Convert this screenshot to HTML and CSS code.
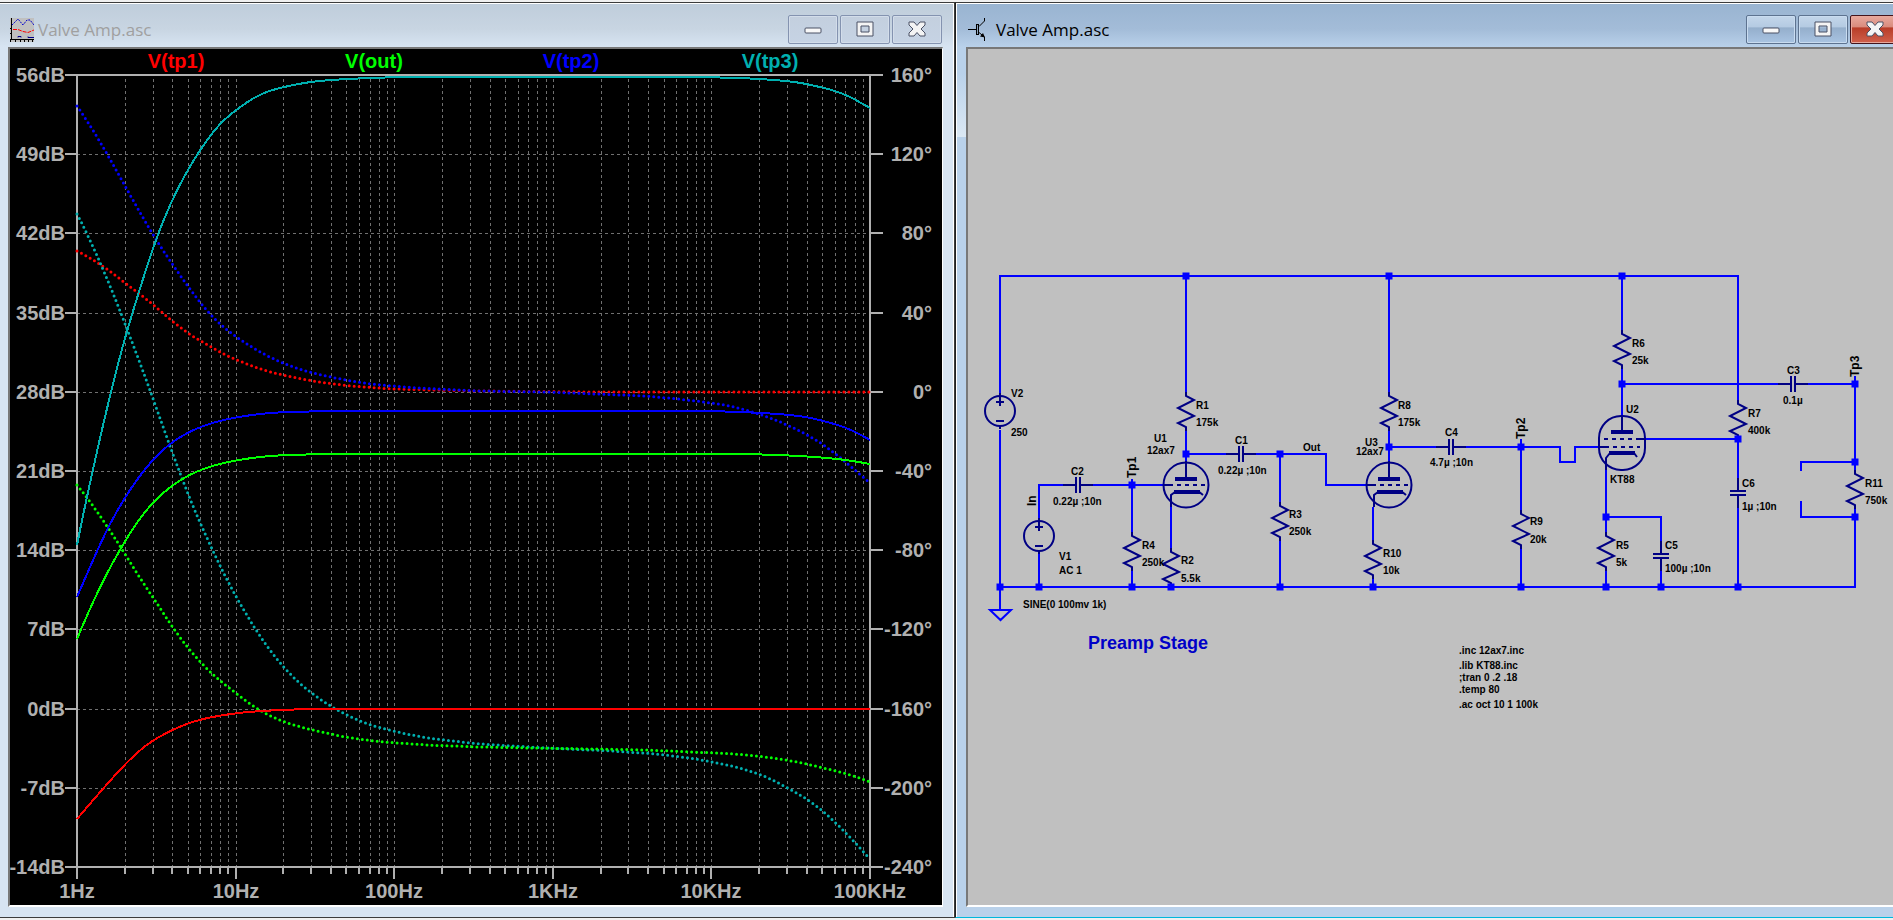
FILE: index.html
```
<!DOCTYPE html>
<html lang="en">
<head>
<meta charset="utf-8">
<title>Valve Amp.asc</title>
<link rel="stylesheet" href="styles.css">
</head>
<body>
<main class="desktop">
  <section class="window window-idle">
    <header class="titlebar">
      <svg class="title-icon" viewBox="0 0 24 24" aria-hidden="true">
        <rect width="24" height="24" fill="#c0c0c0"/>
        <path d="M1.500 0V22M0 21.500H24M0 10.500H2M0 15.500H2M5.500 22V24M10.500 22V24M14.500 22V24M18.500 22V24M22.500 22V24M.5 22V24" stroke="#000" fill="none"/>
        <path d="M2 7L8 1L13 7L17 2H20L24 7" stroke="#00c" stroke-dasharray="2 1" fill="none"/>
        <path d="M3 11.500H8L13 13.500L18 14.500L24 12" stroke="#f00" stroke-dasharray="4 1" fill="none"/>
        <path d="M8 19.500V18.500H11V19.500M18 18.500V19.500H24" stroke="#00008b" fill="none"/>
      </svg>
      <h2 class="title">Valve Amp.asc</h2>
      <div class="controls">
        <button class="control" aria-label="Minimize"><svg viewBox="0 0 24 18"><use href="#minimize"/></svg></button>
        <button class="control" aria-label="Maximize"><svg viewBox="0 0 24 18"><use href="#maximize"/></svg></button>
        <button class="control" aria-label="Close"><svg viewBox="0 0 24 18"><use href="#close"/></svg></button>
      </div>
    </header>
    <div class="client client-plot">
      <svg class="plot" viewBox="10 49 932 856" role="img" aria-label="Frequency response plot">
        <g id="grid" class="grid"></g>
        <g id="axes" class="axes"></g>
        <g id="traces" class="traces"></g>
        <g id="labels" class="plot-labels"></g>
      </svg>
    </div>
  </section>

  <section class="window window-active">
    <header class="titlebar">
      <svg class="title-icon" viewBox="0 0 24 24" aria-hidden="true">
        <path d="M0 11.500H8M16.500 0V3L11 8.500M11 14.500L16.500 19V23" stroke="#000" fill="none"/>
        <rect x="8.500" y="6.500" width="2" height="10" fill="#8fa5bd" stroke="#000"/>
        <path d="M17 19.500L12 18.500L15 15Z"/>
      </svg>
      <h2 class="title">Valve Amp.asc</h2>
      <div class="controls">
        <button class="control" aria-label="Minimize"><svg viewBox="0 0 24 18"><use href="#minimize"/></svg></button>
        <button class="control" aria-label="Maximize"><svg viewBox="0 0 24 18"><use href="#maximize"/></svg></button>
        <button class="control control-close" aria-label="Close"><svg viewBox="0 0 24 18"><use href="#close"/></svg></button>
      </div>
    </header>
    <div class="client client-schematic">
      <svg class="schematic" viewBox="968 49 925 856" role="img" aria-label="Preamp schematic">
        <defs>
          <g id="minimize"><rect x="4" y="7" width="16" height="5" rx="1" fill="#f8f8f8" stroke="#4a5064"/></g>
          <g id="maximize"><path d="M4 1H20V15H4ZM8 5V11H16V5Z" fill="#f4f4f4" fill-rule="evenodd" stroke="#4a5064"/></g>
          <g id="close"><path d="M4 1H9L12 4.500L15 1H20V4L16 8L20 12V15H15L12 11.500L9 15H4V12L8 8L4 4Z" fill="#f4f4f4" stroke="#4a5064" stroke-linejoin="round"/></g>
          <path id="resistor" d="M0 -4V0L8 4L-8 12L8 20L-8 27L0 31V35"/>
          <path id="cap-h" d="M-15 0H-2M2 0H15M-2 -8V8M2 -8V8"/>
          <path id="cap-v" d="M0 -15V-2M0 2V15M-8 -2H8M-8 2H8"/>
          <g id="source">
            <circle r="15"/>
            <path d="M0 -18V-5M-4 -9H4M-4 10H4M0 15V18"/>
          </g>
          <g id="triode">
            <circle r="22.500"/>
            <path d="M0 -24V-6M-23 0H-13M-9 0H-5M-1 0H3M7 0H11M15 0H19M-15 22V10L-11 7M12 6L17 10"/>
            <path class="heavy" d="M-11 -6H11M-12 7H14"/>
          </g>
          <g id="pentode">
            <rect x="-23" y="-27" width="46" height="54" rx="22"/>
            <path d="M0 -28V-11M-18 -4H-14M-10 -4H-6M-2 -4H2M6 -4H10M14 -4H24M-23 4H-13M-9 4H-5M-1 4H3M7 4H11M15 4H18M-16 27V15L-12 10M12 10L15 14"/>
            <path class="heavy" d="M-11 -11H11M-13 10H13"/>
          </g>
        </defs>
        <path class="wire" d="M1000 394V276H1738V401M1000 430V610M1000 587H1855V508M990 610H1011L1000.500 620ZM1039 518V485H1064M1092 485H1165M1132 479V533M1132 571V587M1039 554V587M1186 276V392M1186 431V462M1186 454H1226M1256 454H1326V485H1366M1280 454V502M1280 541V587M1171 507V549M1389 276V392M1389 431V462M1389 447H1436M1466 447H1560V462H1575V447H1599M1521 439V510M1521 549V587M1373 507V541M1373 579V587M1622 276V331M1622 369V416M1622 384H1778M1808 384H1855V470M1855 376V384M1645 439H1738V479M1738 508V587M1606 470V533M1606 571V587M1606 517H1661V542M1661 570V587M1801 471V462H1855M1801 501V517H1855"/>
        <g class="part">
          <use href="#source" x="1000" y="411"/>
          <use href="#source" x="1039" y="536"/>
          <use href="#resistor" x="1186" y="396"/>
          <use href="#resistor" x="1171" y="552"/>
          <use href="#resistor" x="1132" y="536"/>
          <use href="#resistor" x="1280" y="506"/>
          <use href="#resistor" x="1389" y="396"/>
          <use href="#resistor" x="1373" y="544"/>
          <use href="#resistor" x="1521" y="514"/>
          <use href="#resistor" x="1622" y="334"/>
          <use href="#resistor" x="1738" y="404"/>
          <use href="#resistor" x="1606" y="536"/>
          <use href="#resistor" x="1855" y="474"/>
          <use href="#cap-h" x="1078" y="485"/>
          <use href="#cap-h" x="1241" y="454"/>
          <use href="#cap-h" x="1451" y="447"/>
          <use href="#cap-h" x="1793" y="384"/>
          <use href="#cap-v" x="1738" y="493"/>
          <use href="#cap-v" x="1661" y="556"/>
          <use href="#triode" x="1186" y="485"/>
          <use href="#triode" x="1389" y="485"/>
          <use href="#pentode" x="1622" y="443"/>
        </g>
        <path class="nodes" d="M1186 276h0M1389 276h0M1622 276h0M1000 587h0M1039 587h0M1132 587h0M1171 587h0M1280 587h0M1373 587h0M1521 587h0M1606 587h0M1661 587h0M1738 587h0M1132 485h0M1186 454h0M1280 454h0M1389 447h0M1521 447h0M1622 384h0M1738 439h0M1606 517h0M1855 384h0M1855 462h0M1855 517h0"/>
        <g class="part-text">
          <text x="1011" y="397">V2</text><text x="1011" y="436">250</text>
          <text x="1059" y="560">V1</text><text x="1059" y="574">AC 1</text>
          <text x="1023" y="608">SINE(0 100mv 1k)</text>
          <text x="1071" y="475">C2</text><text x="1053" y="505">0.22µ ;10n</text>
          <text x="1142" y="549">R4</text><text x="1142" y="566">250k</text>
          <text x="1181" y="564">R2</text><text x="1181" y="582">5.5k</text>
          <text x="1154" y="442">U1</text><text x="1147" y="454">12ax7</text>
          <text x="1196" y="409">R1</text><text x="1196" y="426">175k</text>
          <text x="1235" y="444">C1</text><text x="1218" y="474">0.22µ ;10n</text>
          <text x="1289" y="518">R3</text><text x="1289" y="535">250k</text>
          <text x="1303" y="451">Out</text>
          <text x="1398" y="409">R8</text><text x="1398" y="426">175k</text>
          <text x="1365" y="446">U3</text><text x="1356" y="455">12ax7</text>
          <text x="1383" y="557">R10</text><text x="1383" y="574">10k</text>
          <text x="1445" y="436">C4</text><text x="1430" y="466">4.7µ ;10n</text>
          <text x="1530" y="525">R9</text><text x="1530" y="543">20k</text>
          <text x="1632" y="347">R6</text><text x="1632" y="364">25k</text>
          <text x="1626" y="413">U2</text><text x="1610" y="483">KT88</text>
          <text x="1748" y="417">R7</text><text x="1748" y="434">400k</text>
          <text x="1787" y="374">C3</text><text x="1783" y="404">0.1µ</text>
          <text x="1742" y="487">C6</text><text x="1742" y="510">1µ ;10n</text>
          <text x="1616" y="549">R5</text><text x="1616" y="566">5k</text>
          <text x="1665" y="549">C5</text><text x="1665" y="572">100µ ;10n</text>
          <text x="1865" y="487">R11</text><text x="1865" y="504">750k</text>
          <text x="1459" y="654">.inc 12ax7.inc</text>
          <text x="1459" y="669">.lib KT88.inc</text>
          <text x="1459" y="681">;tran 0 .2 .18</text>
          <text x="1459" y="693">.temp 80</text>
          <text x="1459" y="708">.ac oct 10 1 100k</text>
        </g>
        <g class="net-text">
          <text transform="translate(1036 506) rotate(-90)">In</text>
          <text transform="translate(1136 478) rotate(-90)">Tp1</text>
          <text transform="translate(1525 439) rotate(-90)">Tp2</text>
          <text transform="translate(1859 377) rotate(-90)">Tp3</text>
        </g>
        <text class="stage-text" x="1088" y="649">Preamp Stage</text>
      </svg>
    </div>
  </section>
</main>
<script src="plot.js"></script>
</body>
</html>
```
FILE: styles.css
```
* { box-sizing: border-box; }

body {
  margin: 0;
  padding-top: 2px;
  background: #f0f0f0;
  overflow-x: hidden;
}

.desktop {
  display: grid;
  grid-template-columns: 955fr 938fr;
  align-items: start;
}

.window {
  min-width: 0;
  overflow: hidden;
  border-top: 1px solid #3c3c3c;
  border-bottom: 1px solid #3c3c3c;
}

.window-idle {
  padding: 0 11px 10px 8px;
  border-right: 1px solid #3c3c3c;
  background: linear-gradient(#bfcddb, #c8d5e2 26px, #d7e4f2 44px);
  box-shadow: inset -1px 1px #fff;
}

.window-active {
  padding: 0 0 10px 10px;
  border-left: 1px solid #202020;
  border-bottom-color: #00b8dc;
  background: linear-gradient(#99b4d1, #a3bcd8 26px, #b9d1ea 44px, #b9d1ea 70px, #dbe8f4 134px, #b9d1ea 134px);
  box-shadow: inset 1px 1px #fff;
}

.titlebar {
  display: flex;
  align-items: center;
  height: 44px;
  padding-top: 9px;
}

.title-icon {
  width: 24px;
  height: 24px;
  margin-left: 2px;
}

.title {
  flex: 1;
  margin: 0 0 0 4px;
  font: 400 17px/24px "Open Sans", "Noto Sans", sans-serif;
  color: #a0a0a0;
}

.window-active .title { color: #000; }

.controls {
  display: flex;
  gap: 2px;
  margin-right: 1px;
}

.window-active .controls { margin-right: -7px; }

.control {
  display: grid;
  place-items: center;
  width: 50px;
  height: 29px;
  padding: 0;
  border: 1px solid #8493b0;
  border-radius: 2px;
  background: linear-gradient(#c3cfde, #c6d3e4);
  box-shadow: inset 0 0 0 1px #d3ddea;
}

.control svg {
  width: 24px;
  height: 18px;
}

.window-active .control {
  border-color: #5d7390;
  background: linear-gradient(#c3d6ea, #b4cae2 42%, #94aecb 43%, #a9c4e2);
  box-shadow: inset 0 0 0 1px #c9dcf0;
}

.window-active .control-close {
  border-color: #43141c;
  background: linear-gradient(#e8a99e, #d98a7c 42%, #b83c28 43%, #d0604c);
  box-shadow: inset 0 0 0 1px #e8a89c;
}

.client {
  border: 2px solid #787878;
  border-right: 1px solid #fff;
  border-bottom-color: #fff;
}

.client-plot { background: #000; }

.client-schematic {
  border-right: 0;
  background: #c0c0c0;
}

.client svg { display: block; width: 100%; height: auto; }

.grid path {
  fill: none;
  stroke: #707070;
  stroke-width: 1;
  stroke-dasharray: 3 3;
  shape-rendering: crispEdges;
}

.axes path {
  fill: none;
  stroke: #b0b0b0;
  stroke-width: 2;
  shape-rendering: crispEdges;
}

.traces path {
  fill: none;
  stroke-width: 2;
  shape-rendering: crispEdges;
}

.traces .phase {
  stroke-width: 3;
  stroke-linecap: round;
  stroke-dasharray: 0 5;
  shape-rendering: auto;
}

.tp1 { stroke: #f00; }
.out { stroke: #0f0; }
.tp2 { stroke: #00f; }
.tp3 { stroke: #00b0b0; }

.plot-labels {
  font: 700 20px "Liberation Sans", Arial, sans-serif;
  fill: #b0b0b0;
}

.plot-labels .middle { text-anchor: middle; }
.plot-labels .end { text-anchor: end; }
.plot-labels .legend-tp1 { fill: #f00; }
.plot-labels .legend-out { fill: #0f0; }
.plot-labels .legend-tp2 { fill: #00f; }
.plot-labels .legend-tp3 { fill: #00b0b0; }

.wire {
  fill: none;
  stroke: #00f;
  stroke-width: 2;
}

.part {
  fill: none;
  stroke: #000084;
  stroke-width: 2;
}

.heavy { stroke-width: 4; }

.nodes {
  stroke: #00f;
  stroke-width: 7;
  stroke-linecap: square;
}

.part-text {
  font: 700 10px "Liberation Sans", Arial, sans-serif;
  fill: #000;
}

.net-text {
  font: 400 12px "Liberation Sans", Arial, sans-serif;
  fill: #000;
  stroke: #000;
  stroke-width: 0;
  font-weight: 700;
}

.stage-text {
  font: 700 18px "Liberation Sans", Arial, sans-serif;
  fill: #0000c8;
}
```
FILE: plot.js
```
const SVG_NS = "http://www.w3.org/2000/svg";
const area = { left: 77, right: 870, top: 75, bottom: 867 };
const decade = (area.right - area.left) / 5;
const step = (area.bottom - area.top) / 10;

function add(parent, tag, attrs, text) {
  const el = document.createElementNS(SVG_NS, tag);
  for (const key in attrs) el.setAttribute(key, attrs[key]);
  if (text) el.textContent = text;
  document.getElementById(parent).appendChild(el);
}

// Grid and ticks
let grid = "";
let ticks = `M${area.left} ${area.top}V879M${area.right} ${area.top}V879M65 ${area.top}H883M65 ${area.bottom}H883`;
for (let d = 0; d < 5; d++) {
  for (let n = 1; n < 10; n++) {
    const x = Math.round(area.left + decade * (d + Math.log10(n)));
    if (x === area.left) continue;
    grid += `M${x + 0.5} 79V${area.bottom}`;
    ticks += `M${x} ${area.bottom}V${n === 1 ? 879 : 874}`;
  }
}
for (let i = 1; i < 10; i++) {
  const y = Math.round(area.top + step * i);
  grid += `M${area.left} ${y + 0.5}H${area.right}`;
  ticks += `M65 ${y}H${area.left}M${area.right} ${y}H883`;
}
add("grid", "path", { d: grid });
add("axes", "path", { d: ticks });

// Axis labels and legend
for (let i = 0; i <= 10; i++) {
  const y = Math.round(area.top + step * i) + 7;
  add("labels", "text", { x: 65, y, class: "end" }, `${56 - 7 * i}dB`);
  add("labels", "text", { x: 932, y, class: "end" }, `${160 - 40 * i}°`);
}
["1Hz", "10Hz", "100Hz", "1KHz", "10KHz", "100KHz"].forEach((name, i) => {
  add("labels", "text", { x: Math.round(area.left + decade * i), y: 898, class: "middle" }, name);
});
[["tp1", 176], ["out", 374], ["tp2", 571], ["tp3", 770]].forEach(([name, x]) => {
  add("labels", "text", { x, y: 68, class: `middle legend-${name}` }, `V(${name})`);
});

// Resample the points once per pixel, then average neighbours
function curve(flat) {
  let ys = [];
  let k = 0;
  for (let x = area.left; x <= area.right; x++) {
    while (k < flat.length - 4 && x > flat[k + 2]) k += 2;
    const t = (x - flat[k]) / (flat[k + 2] - flat[k]);
    ys.push(flat[k + 1] + t * (flat[k + 3] - flat[k + 1]));
  }
  for (let pass = 0; pass < 2; pass++) {
    ys = ys.map((_, i) => {
      const r = Math.min(9, i, ys.length - 1 - i);
      const near = ys.slice(i - r, i + r + 1);
      return near.reduce((a, b) => a + b, 0) / near.length;
    });
  }
  return "M" + ys.map((y, i) => `${area.left + i} ${y.toFixed(1)}`).join("L");
}

const gain = {
  tp1: [77,819, 100,792, 125,764, 142,748, 153,740, 172,730, 188,723, 211,717, 237,713, 260,711, 290,709.5, 312,709, 870,709],
  tp2: [77,597, 90,567, 100,544, 110,523, 125,497, 135,482, 145,469, 153,459, 169,444, 188,432, 211,423, 237,417, 267,413, 287,412, 328,411, 713,411, 753,412.5, 787,414.5, 810,417.5, 835,424, 850,429, 870,440],
  out: [77,639, 90,608, 100,587, 110,567, 125,541, 138,520, 153,502, 167,489, 188,475, 211,466, 237,460, 267,456, 287,455, 323,454, 748,454, 792,455.5, 823,457.5, 847,460, 870,464],
  tp3: [77,545, 86,500, 97,451, 110,395, 123,343, 137,298, 153,247, 159,230, 172,200, 185,174, 200,150, 211,134, 220,123, 237,109, 250,100, 262,93, 283,87, 312,81.5, 337,79.5, 367,78, 400,77, 705,77, 753,78.5, 775,80, 800,82.5, 833,90, 847,95, 870,108]
};
const phase = {
  tp1: [77,251, 87,256, 106,268, 125,283, 149,301, 172,321, 187,333, 206,344, 225,355, 249,365, 273,373, 312,381, 350,386, 393,389, 433,390, 480,391, 600,392, 870,392],
  tp3: [77,214, 85,229, 91,242, 101,264, 115,298, 125,323, 133,345, 144,373, 151,393, 161,421, 172,452, 184,484, 195,512, 207,538, 218,562, 230,586, 243,609, 257,632, 268,648, 283,667, 302,686, 321,700, 335,709, 355,719, 373,726, 397,732, 427,738, 480,744, 530,747, 567,749, 613,751, 657,754, 697,759, 737,767, 765,776, 788,788, 812,802, 832,819, 850,837, 870,859],
  tp2: [77,106, 86,119, 101,143, 115,168, 129,193, 143,218, 153,235, 168,258, 182,278, 200,303, 219,324, 239,339, 263,354, 287,365, 312,373, 340,379, 370,384, 417,388, 480,391, 547,392, 597,394, 647,396, 688,400, 727,405, 760,414, 788,425, 817,440, 836,454, 855,470, 870,483],
  out: [77,485, 86,496, 101,517, 115,538, 130,562, 143,583, 159,606, 172,627, 187,647, 201,663, 215,677, 237,694, 258,710, 283,722, 312,730, 350,738, 383,742, 427,745, 480,747, 530,748, 597,749, 647,750, 693,752, 737,754, 767,757, 798,762, 832,770, 855,776, 870,782]
};
for (const name in phase) add("traces", "path", { class: `phase ${name}`, d: curve(phase[name]) });
for (const name in gain) add("traces", "path", { class: name, d: curve(gain[name]) });
```
